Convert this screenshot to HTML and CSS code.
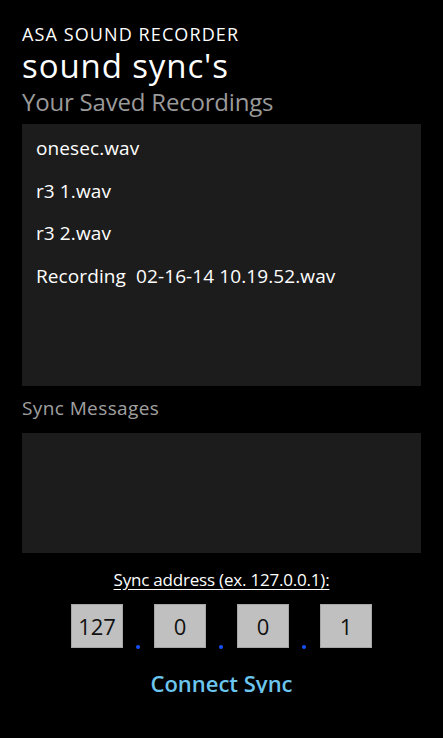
FILE: index.html
```html
<!DOCTYPE html>
<html lang="en">
<head>
  <meta charset="UTF-8">
  <meta name="viewport" content="width=device-width, initial-scale=1.0">
  <title>sound sync's</title>
<link rel="stylesheet" href="styles.css">
</head>
<body>
  <div class="page">
    <div class="app-title">ASA SOUND RECORDER</div>
    <h1 class="page-title">sound sync's</h1>
    <div class="section-title">Your Saved Recordings</div>

    <ul class="recordings">
      <li>onesec.wav</li>
      <li>r3 1.wav</li>
      <li>r3 2.wav</li>
      <li>Recording&nbsp; 02-16-14 10.19.52.wav</li>
    </ul>

    <div class="messages-label">Sync Messages</div>
    <div class="messages"></div>

    <div class="address-label">Sync address (ex. 127.0.0.1):</div>
    <div class="ip-row">
      <div class="ip-box">127</div>
      <span class="ip-dot"></span>
      <div class="ip-box">0</div>
      <span class="ip-dot"></span>
      <div class="ip-box">0</div>
      <span class="ip-dot"></span>
      <div class="ip-box">1</div>
    </div>

    <div class="connect">Connect Sync</div>
  </div>
</body>
</html>
```

FILE: styles.css
```css
/* General */
body {
  margin: 0;
  background: #000;
  color: #fff;
  font-family: 'Open Sans', 'Noto Sans', sans-serif;
}

.page {
  width: 443px;
  height: 738px;
  box-sizing: border-box;
  padding: 23px 22px 0;
}

/* Header */
.app-title {
  font-size: 18px;
  line-height: 22px;
  letter-spacing: 1.1px;
}

.page-title {
  margin: 2px 0 0;
  font-size: 33px;
  font-weight: 400;
  line-height: 38px;
  letter-spacing: 0.9px;
}

.section-title {
  margin-top: 2px;
  font-size: 24px;
  line-height: 30px;
  color: #9a9a9a;
  letter-spacing: -0.2px;
}

/* Recordings list */
.recordings {
  list-style: none;
  box-sizing: border-box;
  margin: 7px 0 0;
  padding: 3px 14px 0;
  height: 262px;
  background: #1c1c1c;
}

.recordings li {
  font-size: 19px;
  line-height: 42.5px;
  letter-spacing: 0.1px;
}

/* Sync messages */
.messages-label {
  margin-top: 10px;
  font-size: 19px;
  line-height: 24px;
  color: #a0a0a0;
  letter-spacing: 0.4px;
}

.messages {
  margin-top: 13px;
  height: 120px;
  background: #1c1c1c;
}

/* Address */
.address-label {
  margin-top: 15px;
  text-align: center;
  font-size: 17px;
  line-height: 24px;
  letter-spacing: -0.2px;
  text-decoration: underline;
  text-underline-offset: 3px;
}

.ip-row {
  display: flex;
  justify-content: center;
  align-items: flex-end;
  margin-top: 12px;
}

.ip-box {
  width: 50px;
  height: 42px;
  background: #c0c0c0;
  border: 1px solid #a6a6a6;
  color: #111;
  font-size: 22px;
  display: flex;
  align-items: center;
  justify-content: center;
}

.ip-dot {
  width: 4px;
  height: 4px;
  margin: 0 14px -1px 13px;
  border-radius: 50%;
  background: #1452ff;
}

/* Connect button (descenders clipped like the original) */
.connect {
  margin-top: 20px;
  height: 25px;
  overflow: hidden;
  text-align: center;
  font-size: 22px;
  line-height: 30px;
  color: #6cc5ee;
  font-weight: 600;
}
```
